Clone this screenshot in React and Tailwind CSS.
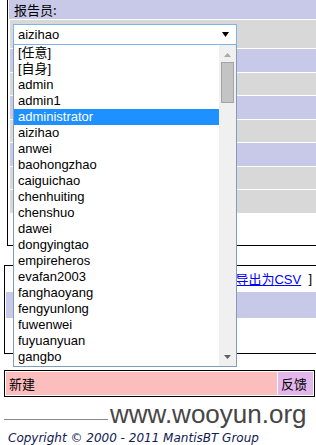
import React from "react";

const items = [
  "[任意]", "[自身]", "admin", "admin1", "administrator", "aizihao", "anwei",
  "baohongzhao", "caiguichao", "chenhuiting", "chenshuo", "dawei", "dongyingtao",
  "empireheros", "evafan2003", "fanghaoyang", "fengyunlong", "fuwenwei",
  "fuyuanyuan", "gangbo",
];

const F = { fontFamily: '"Liberation Sans", "Noto Sans CJK SC", Arial, sans-serif' };

export default function App() {
  return (
    <div
      className="relative w-[316px] h-[445px] overflow-hidden bg-white text-black"
      style={F}
    >
      {/* Table 1 */}
      <div className="ml-[7px] w-[320px] border-l border-b border-black pl-px">
        <div className="h-[19px] bg-[#c8c8e8] pl-[5px] text-[13px] leading-[19px] font-['Noto_Sans_CJK_SC',sans-serif]">
          报告员:
        </div>
        <div className="mt-px ml-px h-[28px] bg-[#d8d8d8]" />
        <div className="mt-px ml-px h-[23px] bg-[#c8c8e8]" />
        <div className="mt-px ml-px h-[22px] bg-[#d8d8d8]" />
        <div className="mt-px ml-px h-[23px] bg-[#c8c8e8]" />
        <div className="mt-px ml-px h-[22px] bg-[#d8d8d8]" />
        <div className="mt-px ml-px h-[23px] bg-[#c8c8e8]" />
        <div className="mt-px ml-px h-[22px] bg-[#d8d8d8]" />
        <div className="mt-px ml-px h-[23px] bg-[#d8d8d8]" />
        <div className="h-[32px]" />
      </div>

      {/* Table 2 */}
      <div className="mt-[19px] ml-[4px] w-[330px] border-t border-l border-b border-black pl-px">
        <div className="flex h-[26px] items-center text-[13px] leading-[16px]">
          <span className="ml-auto mr-[22px] flex items-center">
            <a className="text-[#0000ff] underline">
              <span className="font-['Noto_Sans_CJK_SC',sans-serif]">导出为</span>CSV
            </a>
            <span>&nbsp;&nbsp;]</span>
          </span>
        </div>
        <div className="h-[26px] bg-[#c8c8e8]" />
        <div className="h-[35px]" />
      </div>

      {/* Table 3 */}
      <div className="mt-[16px] ml-[4px] w-[311px] border border-black p-px">
        <div className="flex h-[23px] text-[13px] leading-[23px] font-['Noto_Sans_CJK_SC',sans-serif]">
          <div className="w-[271px] bg-[#fcbdbd] pl-[3px]">新建</div>
          <div className="ml-px flex-1 bg-[#e3b7eb] pl-[3px]">反馈</div>
        </div>
      </div>

      {/* Footer */}
      <div className="relative mt-[22px]">
        <div className="ml-[4px] mr-[6px] h-px bg-[#8a8a8a]" />
        <div className="absolute left-[108px] top-[-19px] bg-white pl-[2px] pr-[8px] text-[26px] leading-[28px] text-[#464646]">
          www.wooyun.org
        </div>
        <div className="mt-[10px] ml-[8px] text-[12px] leading-[16px] italic text-[#102050] font-['DejaVu_Sans',sans-serif]">
          Copyright © 2000 - 2011 MantisBT Group
        </div>
      </div>

      {/* Select + open listbox overlay */}
      <div className="absolute left-[13px] top-[24px] w-[224px]">
        <div className="relative h-[21px] border border-[#7eb4ea] bg-white pl-[4px] text-[13px] leading-[19px]">
          aizihao
          <svg className="absolute right-[7px] top-[7px]" width="7" height="5" viewBox="0 0 7 5">
            <polygon points="0,0 7,0 3.5,5" fill="#000" />
          </svg>
        </div>
        <div className="flex h-[322px] border border-t-0 border-[#7f9db9] bg-white">
          <div className="flex-1">
            {items.map((it) => (
              <div
                key={it}
                className={
                  "h-[16px] pl-[4px] text-[13px] leading-[16px] " +
                  (it === "administrator" ? "bg-[#1e90ff] text-white" : "text-black")
                }
              >
                {it}
              </div>
            ))}
          </div>
          <div className="flex w-[17px] flex-col items-center bg-[#f0f0f0]">
            <svg className="mt-[8px]" width="7" height="4" viewBox="0 0 7 4">
              <polygon points="3.5,0 7,4 0,4" fill="#a8a8a8" />
            </svg>
            <div className="mt-[5px] h-[41px] w-[13px] border border-[#a4a4a4] bg-[#c4c4c4]" />
            <svg className="mt-auto mb-[7px]" width="7" height="4" viewBox="0 0 7 4">
              <polygon points="0,0 7,0 3.5,4" fill="#606060" />
            </svg>
          </div>
        </div>
      </div>
    </div>
  );
}
